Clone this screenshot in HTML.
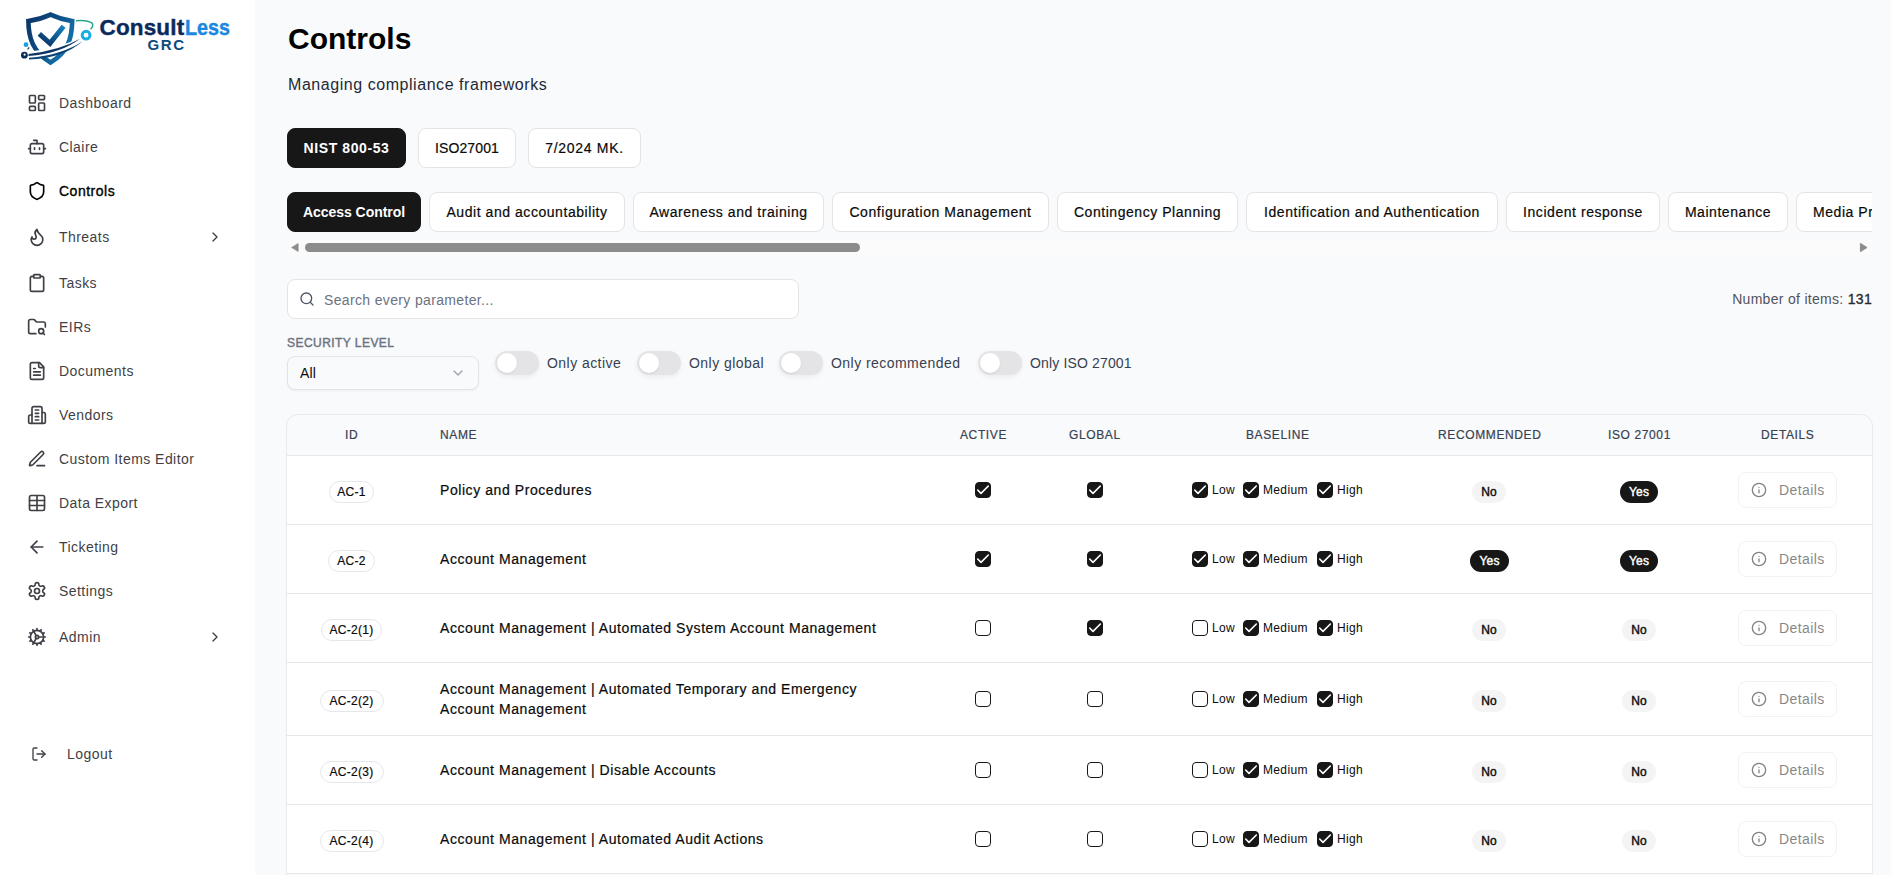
<!DOCTYPE html>
<html><head><meta charset="utf-8">
<style>
*{box-sizing:border-box;margin:0;padding:0}
html,body{width:1891px;height:875px;overflow:hidden}
body{font-family:"Liberation Sans",sans-serif;background:#f9fafb;position:relative;color:#0a0a0a}
.a{position:absolute}
#side{position:absolute;left:0;top:0;width:255px;height:875px;background:#fff}
.nav{position:absolute;left:27px;height:20px;width:200px;display:flex;align-items:center;font-size:14px;line-height:20px;color:#3f3f46;letter-spacing:.45px}
.nav svg{width:20px;height:20px;flex:none;margin-right:12px;fill:none;stroke:currentColor;stroke-width:2;stroke-linecap:round;stroke-linejoin:round}
.nav .chev{position:absolute;left:180px;width:16px;height:16px;margin:0}
.ic{fill:none;stroke:currentColor;stroke-width:2;stroke-linecap:round;stroke-linejoin:round}
#main{position:absolute;left:255px;top:0;width:1636px;height:875px}
.btn{position:absolute;height:40px;border:1px solid #e4e4e7;background:#fff;border-radius:8px;display:flex;align-items:center;justify-content:center;font-size:14px;line-height:20px;color:#0a0a0a;letter-spacing:.55px;white-space:nowrap;-webkit-text-stroke:.2px currentColor}
.btn.on{background:#171717;border-color:#171717;color:#fff;font-weight:700;letter-spacing:.1px;-webkit-text-stroke:0}

.lbl{position:absolute;font-size:14px;line-height:20px;color:#374151;letter-spacing:.45px;white-space:nowrap}
.tog{position:absolute;top:351px;width:44px;height:24px;border-radius:12px;background:#e4e4e7;box-shadow:0 2px 5px rgba(0,0,0,.06)}
.tog::after{content:"";position:absolute;left:2px;top:2px;width:20px;height:20px;border-radius:50%;background:#fff;box-shadow:0 1px 2px rgba(0,0,0,.08)}
#tbl{position:absolute;left:286px;top:414px;width:1587px;height:470px;border:1px solid #e9eaee;border-radius:12px;background:#f9fafb;overflow:hidden}
.th{position:absolute;margin-left:1px;top:0;height:40px;line-height:40px;font-size:12px;color:#374151;letter-spacing:.62px;white-space:nowrap;-webkit-text-stroke:.2px currentColor}
.row{position:absolute;left:0;width:1585px;border-top:1px solid #e5e7eb;background:#fff}
.idb{position:absolute;height:22px;border:1px solid #e5e7eb;border-radius:11px;font-size:12px;line-height:20px;text-align:center;color:#0a0a0a;letter-spacing:.3px;-webkit-text-stroke:.2px currentColor}
.nm{position:absolute;left:152px;font-size:14px;line-height:20px;color:#0a0a0a;letter-spacing:.57px;white-space:nowrap;-webkit-text-stroke:.2px currentColor}
.cb{position:absolute;width:16px;height:16px;border-radius:4px;border:1px solid #171717;background:#fff}
.cb.on{background:#171717}
.cb svg{position:absolute;left:-1px;top:-1px;width:16px;height:16px;fill:none;stroke:#fff;stroke-width:2.4;stroke-linecap:round;stroke-linejoin:round}
.bl{position:absolute;font-size:12px;line-height:16px;color:#0a0a0a;letter-spacing:.35px}
.pill{position:absolute;height:22px;border-radius:11px;font-size:12px;line-height:22px;text-align:center;background:#f4f4f5;color:#0a0a0a;-webkit-text-stroke:.4px currentColor;letter-spacing:.2px}
.row>*{margin-left:1px}
.pill.y{background:#171717;color:#fff}
.det{position:absolute;left:1450px;width:99px;height:36px;border:1px solid #e5e7eb;border-radius:8px;background:#fff;opacity:.5;font-size:14px;line-height:34px;color:#0a0a0a;letter-spacing:.4px}
.det svg{position:absolute;left:12px;top:9px;width:16px;height:16px}
.det span{position:absolute;left:40px;top:0}
</style></head><body>
<div id="side">
  <!-- logo -->
  <svg class="a" style="left:0;top:0" width="100" height="70" viewBox="0 0 100 70">
    <defs>
      <linearGradient id="sg" x1="0" y1="0" x2="1" y2="0.6">
        <stop offset="0" stop-color="#0b3465"/><stop offset="0.5" stop-color="#0e4c84"/><stop offset="1" stop-color="#1675ad"/>
      </linearGradient>
      <linearGradient id="cg" x1="0" y1="1" x2="1" y2="0">
        <stop offset="0" stop-color="#0a2f5e"/><stop offset="1" stop-color="#1583c2"/>
      </linearGradient>
    </defs>
    <path d="M50.5 14.6 C44 17.6 36 20 28.4 21.1 C28.4 38 33 52 50.5 62.5 C68 52 72 38 72.2 21.1 C64.6 20 57 17.6 50.5 14.6 Z" fill="none" stroke="url(#sg)" stroke-width="4.6" stroke-linejoin="miter"/>
    <polyline points="39.3,33.8 50,43.3 63.6,26.3" fill="none" stroke="url(#cg)" stroke-width="5"/>
    <path d="M26 58.5 Q62 56 85 40.5 L84 36.5 Q58 48.5 26 52Z" fill="#fff"/>
    <path d="M28.5 53.9 Q60 50.4 80 38.8 Q61 53.6 28.5 56.1Z" fill="#0b3563"/>
    <path d="M29 57.7 Q62 55 82.6 41.2 Q63 58.4 29 59.6Z" fill="#0d4478"/>
    <circle cx="24.4" cy="55.2" r="3.4" fill="#0b2d57"/>
    <circle cx="24.6" cy="54.6" r="1.1" fill="#fff"/>
    <circle cx="26" cy="44.7" r="2.4" fill="#1e9ee2"/>
    <path d="M27.6 49.4 L29.2 47.4" stroke="#0b3563" stroke-width="1.1"/>
    <circle cx="86.1" cy="35.2" r="3.9" fill="none" stroke="#19aee0" stroke-width="3"/>
    <path d="M76 20.8 Q87 19.4 92.2 23.2 Q93.8 26.4 90.6 29.2" fill="none" stroke="#2ba58a" stroke-width="1.5"/>
  </svg>
  <div class="a" style="left:99.5px;top:13.5px;font-size:22.5px;line-height:28px;font-weight:700;letter-spacing:.15px;color:#0b2a5b;white-space:nowrap;-webkit-text-stroke:.4px currentColor">Consult<span style="display:inline-block;color:#1a88e0;transform:scaleX(.875);transform-origin:0 50%;letter-spacing:0;margin-left:1px">Less</span></div>
  <div class="a" style="left:147.5px;top:36px;font-size:15px;line-height:18px;font-weight:700;letter-spacing:1.6px;color:#0c4a7c">GRC</div>

  <div class="nav" style="top:93px"><svg viewBox="0 0 24 24"><rect width="7" height="9" x="3" y="3" rx="1"/><rect width="7" height="5" x="14" y="3" rx="1"/><rect width="7" height="9" x="14" y="12" rx="1"/><rect width="7" height="5" x="3" y="16" rx="1"/></svg>Dashboard</div>
  <div class="nav" style="top:137px"><svg viewBox="0 0 24 24"><path d="M12 8V4H8"/><rect width="16" height="12" x="4" y="8" rx="2"/><path d="M2 14h2"/><path d="M20 14h2"/><path d="M15 13v2"/><path d="M9 13v2"/></svg>Claire</div>
  <div class="nav" style="top:181px;color:#000;-webkit-text-stroke:.35px currentColor;letter-spacing:.5px"><svg viewBox="0 0 24 24"><path d="M20 13c0 5-3.5 7.5-7.660 8.95a1 1 0 0 1-.67-.01C7.5 20.5 4 18 4 13V6a1 1 0 0 1 1-1c2 0 4.5-1.2 6.24-2.72a1.17 1.170 0 0 1 1.52 0C14.51 3.81 17 5 19 5a1 1 0 0 1 1 1z"/></svg>Controls</div>
  <div class="nav" style="top:227px"><svg viewBox="0 0 24 24"><path d="M8.5 14.5A2.5 2.5 0 0 0 11 12c0-1.38-.5-2-1-3-1.072-2.143-.224-4.054 2-6 .5 2.5 2 4.9 4 6.5 2 1.6 3 3.5 3 5.5a7 7 0 1 1-14 0c0-1.153.433-2.294 1-3a2.5 2.5 0 0 0 2.5 2.5z"/></svg>Threats<svg class="chev" viewBox="0 0 24 24"><path d="m9 18 6-6-6-6"/></svg></div>
  <div class="nav" style="top:273px"><svg viewBox="0 0 24 24"><rect width="8" height="4" x="8" y="2" rx="1" ry="1"/><path d="M16 4h2a2 2 0 0 1 2 2v14a2 2 0 0 1-2 2H6a2 2 0 0 1-2-2V6a2 2 0 0 1 2-2h2"/></svg>Tasks</div>
  <div class="nav" style="top:317px"><svg viewBox="0 0 24 24"><path d="M10.7 20H4a2 2 0 0 1-2-2V5a2 2 0 0 1 2-2h3.9a2 2 0 0 1 1.69.9l.81 1.2a2 2 0 0 0 1.67.9H20a2 2 0 0 1 2 2v4.1"/><path d="m21 21-1.9-1.9"/><circle cx="17" cy="17" r="3"/></svg>EIRs</div>
  <div class="nav" style="top:361px"><svg viewBox="0 0 24 24"><path d="M15 2H6a2 2 0 0 0-2 2v16a2 2 0 0 0 2 2h12a2 2 0 0 0 2-2V7Z"/><path d="M14 2v4a2 2 0 0 0 2 2h4"/><path d="M10 9H8"/><path d="M16 13H8"/><path d="M16 17H8"/></svg>Documents</div>
  <div class="nav" style="top:405px"><svg viewBox="0 0 24 24"><path d="M6 22V4a2 2 0 0 1 2-2h8a2 2 0 0 1 2 2v18Z"/><path d="M6 12H4a2 2 0 0 0-2 2v6a2 2 0 0 0 2 2h2"/><path d="M18 9h2a2 2 0 0 1 2 2v9a2 2 0 0 1-2 2h-2"/><path d="M10 6h4"/><path d="M10 10h4"/><path d="M10 14h4"/><path d="M10 18h4"/></svg>Vendors</div>
  <div class="nav" style="top:449px"><svg viewBox="0 0 24 24"><path d="M12 20h9"/><path d="M16.376 3.622a1 1 0 0 1 3.002 3.002L7.368 18.635a2 2 0 0 1-.855.506l-2.872.838a.5.5 0 0 1-.62-.62l.838-2.872a2 2 0 0 1 .506-.854z"/></svg>Custom Items Editor</div>
  <div class="nav" style="top:493px"><svg viewBox="0 0 24 24"><path d="M12 3v18"/><rect width="18" height="18" x="3" y="3" rx="2"/><path d="M3 9h18"/><path d="M3 15h18"/></svg>Data Export</div>
  <div class="nav" style="top:537px"><svg viewBox="0 0 24 24"><path d="m12 19-7-7 7-7"/><path d="M19 12H5"/></svg>Ticketing</div>
  <div class="nav" style="top:581px"><svg viewBox="0 0 24 24"><path d="M12.22 2h-.44a2 2 0 0 0-2 2v.18a2 2 0 0 1-1 1.73l-.43.25a2 2 0 0 1-2 0l-.15-.08a2 2 0 0 0-2.73.73l-.22.38a2 2 0 0 0 .73 2.730l.15.1a2 2 0 0 1 1 1.72v.51a2 2 0 0 1-1 1.74l-.15.09a2 2 0 0 0-.73 2.73l.22.38a2 2 0 0 0 2.73.73l.15-.08a2 2 0 0 1 2 0l.43.25a2 2 0 0 1 1 1.73V20a2 2 0 0 0 2 2h.44a2 2 0 0 0 2-2v-.18a2 2 0 0 1 1-1.73l.43-.25a2 2 0 0 1 2 0l.15.08a2 2 0 0 0 2.73-.73l.22-.39a2 2 0 0 0-.73-2.73l-.15-.08a2 2 0 0 1-1-1.74v-.5a2 2 0 0 1 1-1.74l.15-.09a2 2 0 0 0 .73-2.73l-.22-.38a2 2 0 0 0-2.73-.73l-.15.08a2 2 0 0 1-2 0l-.43-.25a2 2 0 0 1-1-1.73V4a2 2 0 0 0-2-2z"/><circle cx="12" cy="12" r="3"/></svg>Settings</div>
  <div class="nav" style="top:626.5px"><svg viewBox="0 0 24 24"><path d="M12 20a8 8 0 1 0 0-16 8 8 0 0 0 0 16Z"/><path d="M12 14a2 2 0 1 0 0-4 2 2 0 0 0 0 4Z"/><path d="M12 2v2"/><path d="M12 22v-2"/><path d="m17 20.66-1-1.73"/><path d="M11 10.27 7 3.34"/><path d="m20.66 17-1.73-1"/><path d="m3.34 7 1.73 1"/><path d="M14 12h8"/><path d="M2 12h2"/><path d="m20.66 7-1.73 1"/><path d="m3.34 17 1.73-1"/><path d="m17 3.34-1 1.73"/><path d="m11 13.73-4 6.93"/></svg>Admin<svg class="chev" viewBox="0 0 24 24"><path d="m9 18 6-6-6-6"/></svg></div>
  <div class="nav" style="top:744px;left:31px"><svg viewBox="0 0 24 24" style="width:16px;height:16px;margin-right:20px"><path d="M9 21H5a2 2 0 0 1-2-2V5a2 2 0 0 1 2-2h4"/><polyline points="16 17 21 12 16 7"/><line x1="21" x2="9" y1="12" y2="12"/></svg>Logout</div>
</div>

<!-- MAIN -->
<div class="a" style="left:288px;top:20.5px;font-size:30px;line-height:36px;font-weight:700;color:#000">Controls</div>
<div class="a" style="left:288px;top:73px;font-size:16px;line-height:24px;color:#1f2937;letter-spacing:.55px">Managing compliance frameworks</div>

<div class="btn on" style="left:287px;top:128px;width:119px;letter-spacing:.6px">NIST 800-53</div>
<div class="btn" style="left:418px;top:128px;width:98px;letter-spacing:.1px">ISO27001</div>
<div class="btn" style="left:528px;top:128px;width:113px;letter-spacing:.7px">7/2024 MK.</div>

<div id="tabs" class="a" style="left:287px;top:192px;width:1585px;height:63px;overflow:hidden">
  <div class="btn on" style="left:0;top:0;width:134px;letter-spacing:-.05px">Access Control</div>
  <div class="btn" style="left:142px;top:0;width:196px">Audit and accountability</div>
  <div class="btn" style="left:346px;top:0;width:191px">Awareness and training</div>
  <div class="btn" style="left:545px;top:0;width:217px">Configuration Management</div>
  <div class="btn" style="left:770px;top:0;width:181px">Contingency Planning</div>
  <div class="btn" style="left:959px;top:0;width:252px">Identification and Authentication</div>
  <div class="btn" style="left:1219px;top:0;width:154px">Incident response</div>
  <div class="btn" style="left:1381px;top:0;width:120px">Maintenance</div>
  <div class="btn" style="left:1509px;top:0;width:160px;justify-content:flex-start;padding-left:16px">Media Protection</div>
  <!-- scrollbar -->
  <div class="a" style="left:0;top:48px;width:1585px;height:15px;background:#fbfbfb"></div>
  <svg class="a" style="left:4px;top:51px" width="8" height="9" viewBox="0 0 8 9"><path d="M7.2 0.4 L0.6 4.5 L7.2 8.6Z" fill="#8c8c8c" stroke="#8c8c8c" stroke-width=".6" stroke-linejoin="round"/></svg>
  <div class="a" style="left:18px;top:51px;width:555px;height:9px;border-radius:5px;background:#8c8c8c"></div>
  <svg class="a" style="left:1572px;top:50px" width="9" height="11" viewBox="0 0 9 11"><path d="M1.4 1.3 L8 5.5 L1.4 9.7Z" fill="#8c8c8c" stroke="#8c8c8c" stroke-width=".9" stroke-linejoin="round"/></svg>
</div>

<!-- search -->
<div class="a" style="left:287px;top:279px;width:512px;height:40px;border:1px solid #e4e4e7;border-radius:8px;background:#fff"></div>
<svg class="a ic" style="left:299px;top:291px;color:#4b5563" width="16" height="16" viewBox="0 0 24 24"><circle cx="11" cy="11" r="8"/><path d="m21 21-4.3-4.3"/></svg>
<div class="lbl" style="left:324px;top:290px;color:#6b7280;letter-spacing:.35px">Search every parameter...</div>
<div class="lbl" style="right:19px;top:289px;color:#52525b;letter-spacing:.3px">Number of items: <span style="color:#27272a;letter-spacing:.3px;-webkit-text-stroke:.3px currentColor">131</span></div>

<div class="a" style="left:287px;top:335px;font-size:12px;line-height:16px;color:#6b7280;letter-spacing:.45px;-webkit-text-stroke:.4px currentColor">SECURITY LEVEL</div>
<div class="a" style="left:287px;top:356px;width:192px;height:34px;border:1px solid #e4e4e7;border-radius:8px;background:#f9fafb;box-shadow:0 1px 2px rgba(0,0,0,.05)"></div>
<div class="lbl" style="left:300px;top:363px;color:#0a0a0a;letter-spacing:.2px">All</div>
<svg class="a ic" style="left:450px;top:365px;color:#9ca3af" width="16" height="16" viewBox="0 0 24 24"><path d="m6 9 6 6 6-6"/></svg>

<div class="tog" style="left:495px"></div><div class="lbl" style="left:547px;top:353px">Only active</div>
<div class="tog" style="left:637px"></div><div class="lbl" style="left:689px;top:353px">Only global</div>
<div class="tog" style="left:779px"></div><div class="lbl" style="left:831px;top:353px">Only recommended</div>
<div class="tog" style="left:978px"></div><div class="lbl" style="left:1030px;top:353px;letter-spacing:.15px">Only ISO 27001</div>

<div id="tbl">
  <div class="a" style="left:0;top:458px;width:1585px;height:1px;background:#e5e7eb"></div>
  <div class="th" style="left:57px">ID</div>
  <div class="th" style="left:152px">NAME</div>
  <div class="th" style="left:672px">ACTIVE</div>
  <div class="th" style="left:781px">GLOBAL</div>
  <div class="th" style="left:958px">BASELINE</div>
  <div class="th" style="left:1150px">RECOMMENDED</div>
  <div class="th" style="left:1320px">ISO 27001</div>
  <div class="th" style="left:1473px">DETAILS</div>
<div class="row" style="top:40px;height:69px"><div class="idb" style="left:41.0px;top:25px;width:45px">AC-1</div><div class="nm" style="top:24px">Policy and Procedures</div><div class="cb on" style="left:687px;top:26px"><svg viewBox="0 0 24 24"><path d="M20 6 9 17l-5-5"/></svg></div><div class="cb on" style="left:799px;top:26px"><svg viewBox="0 0 24 24"><path d="M20 6 9 17l-5-5"/></svg></div><div class="cb on" style="left:904px;top:26px"><svg viewBox="0 0 24 24"><path d="M20 6 9 17l-5-5"/></svg></div><div class="bl" style="left:924px;top:26px">Low</div><div class="cb on" style="left:955px;top:26px"><svg viewBox="0 0 24 24"><path d="M20 6 9 17l-5-5"/></svg></div><div class="bl" style="left:975px;top:26px">Medium</div><div class="cb on" style="left:1029px;top:26px"><svg viewBox="0 0 24 24"><path d="M20 6 9 17l-5-5"/></svg></div><div class="bl" style="left:1049px;top:26px">High</div><div class="pill" style="left:1184px;top:25px;width:34px">No</div><div class="pill y" style="left:1332px;top:25px;width:38px">Yes</div><div class="det" style="top:16px"><svg class="ic" viewBox="0 0 24 24"><circle cx="12" cy="12" r="10"/><path d="M12 16v-4"/><path d="M12 8h.01"/></svg><span>Details</span></div></div>
<div class="row" style="top:109px;height:69px"><div class="idb" style="left:40.0px;top:25px;width:47px">AC-2</div><div class="nm" style="top:24px">Account Management</div><div class="cb on" style="left:687px;top:26px"><svg viewBox="0 0 24 24"><path d="M20 6 9 17l-5-5"/></svg></div><div class="cb on" style="left:799px;top:26px"><svg viewBox="0 0 24 24"><path d="M20 6 9 17l-5-5"/></svg></div><div class="cb on" style="left:904px;top:26px"><svg viewBox="0 0 24 24"><path d="M20 6 9 17l-5-5"/></svg></div><div class="bl" style="left:924px;top:26px">Low</div><div class="cb on" style="left:955px;top:26px"><svg viewBox="0 0 24 24"><path d="M20 6 9 17l-5-5"/></svg></div><div class="bl" style="left:975px;top:26px">Medium</div><div class="cb on" style="left:1029px;top:26px"><svg viewBox="0 0 24 24"><path d="M20 6 9 17l-5-5"/></svg></div><div class="bl" style="left:1049px;top:26px">High</div><div class="pill y" style="left:1182px;top:25px;width:39px">Yes</div><div class="pill y" style="left:1332px;top:25px;width:38px">Yes</div><div class="det" style="top:16px"><svg class="ic" viewBox="0 0 24 24"><circle cx="12" cy="12" r="10"/><path d="M12 16v-4"/><path d="M12 8h.01"/></svg><span>Details</span></div></div>
<div class="row" style="top:178px;height:69px"><div class="idb" style="left:33.0px;top:25px;width:61px">AC-2(1)</div><div class="nm" style="top:24px">Account Management | Automated System Account Management</div><div class="cb" style="left:687px;top:26px"></div><div class="cb on" style="left:799px;top:26px"><svg viewBox="0 0 24 24"><path d="M20 6 9 17l-5-5"/></svg></div><div class="cb" style="left:904px;top:26px"></div><div class="bl" style="left:924px;top:26px">Low</div><div class="cb on" style="left:955px;top:26px"><svg viewBox="0 0 24 24"><path d="M20 6 9 17l-5-5"/></svg></div><div class="bl" style="left:975px;top:26px">Medium</div><div class="cb on" style="left:1029px;top:26px"><svg viewBox="0 0 24 24"><path d="M20 6 9 17l-5-5"/></svg></div><div class="bl" style="left:1049px;top:26px">High</div><div class="pill" style="left:1184px;top:25px;width:34px">No</div><div class="pill" style="left:1334px;top:25px;width:34px">No</div><div class="det" style="top:16px"><svg class="ic" viewBox="0 0 24 24"><circle cx="12" cy="12" r="10"/><path d="M12 16v-4"/><path d="M12 8h.01"/></svg><span>Details</span></div></div>
<div class="row" style="top:247px;height:73px"><div class="idb" style="left:31.5px;top:27px;width:64px">AC-2(2)</div><div class="nm" style="top:16px">Account Management | Automated Temporary and Emergency<br>Account Management</div><div class="cb" style="left:687px;top:28px"></div><div class="cb" style="left:799px;top:28px"></div><div class="cb" style="left:904px;top:28px"></div><div class="bl" style="left:924px;top:28px">Low</div><div class="cb on" style="left:955px;top:28px"><svg viewBox="0 0 24 24"><path d="M20 6 9 17l-5-5"/></svg></div><div class="bl" style="left:975px;top:28px">Medium</div><div class="cb on" style="left:1029px;top:28px"><svg viewBox="0 0 24 24"><path d="M20 6 9 17l-5-5"/></svg></div><div class="bl" style="left:1049px;top:28px">High</div><div class="pill" style="left:1184px;top:27px;width:34px">No</div><div class="pill" style="left:1334px;top:27px;width:34px">No</div><div class="det" style="top:18px"><svg class="ic" viewBox="0 0 24 24"><circle cx="12" cy="12" r="10"/><path d="M12 16v-4"/><path d="M12 8h.01"/></svg><span>Details</span></div></div>
<div class="row" style="top:320px;height:69px"><div class="idb" style="left:31.5px;top:25px;width:64px">AC-2(3)</div><div class="nm" style="top:24px">Account Management | Disable Accounts</div><div class="cb" style="left:687px;top:26px"></div><div class="cb" style="left:799px;top:26px"></div><div class="cb" style="left:904px;top:26px"></div><div class="bl" style="left:924px;top:26px">Low</div><div class="cb on" style="left:955px;top:26px"><svg viewBox="0 0 24 24"><path d="M20 6 9 17l-5-5"/></svg></div><div class="bl" style="left:975px;top:26px">Medium</div><div class="cb on" style="left:1029px;top:26px"><svg viewBox="0 0 24 24"><path d="M20 6 9 17l-5-5"/></svg></div><div class="bl" style="left:1049px;top:26px">High</div><div class="pill" style="left:1184px;top:25px;width:34px">No</div><div class="pill" style="left:1334px;top:25px;width:34px">No</div><div class="det" style="top:16px"><svg class="ic" viewBox="0 0 24 24"><circle cx="12" cy="12" r="10"/><path d="M12 16v-4"/><path d="M12 8h.01"/></svg><span>Details</span></div></div>
<div class="row" style="top:389px;height:69px"><div class="idb" style="left:31.5px;top:25px;width:64px">AC-2(4)</div><div class="nm" style="top:24px">Account Management | Automated Audit Actions</div><div class="cb" style="left:687px;top:26px"></div><div class="cb" style="left:799px;top:26px"></div><div class="cb" style="left:904px;top:26px"></div><div class="bl" style="left:924px;top:26px">Low</div><div class="cb on" style="left:955px;top:26px"><svg viewBox="0 0 24 24"><path d="M20 6 9 17l-5-5"/></svg></div><div class="bl" style="left:975px;top:26px">Medium</div><div class="cb on" style="left:1029px;top:26px"><svg viewBox="0 0 24 24"><path d="M20 6 9 17l-5-5"/></svg></div><div class="bl" style="left:1049px;top:26px">High</div><div class="pill" style="left:1184px;top:25px;width:34px">No</div><div class="pill" style="left:1334px;top:25px;width:34px">No</div><div class="det" style="top:16px"><svg class="ic" viewBox="0 0 24 24"><circle cx="12" cy="12" r="10"/><path d="M12 16v-4"/><path d="M12 8h.01"/></svg><span>Details</span></div></div>
</div>
</body></html>
